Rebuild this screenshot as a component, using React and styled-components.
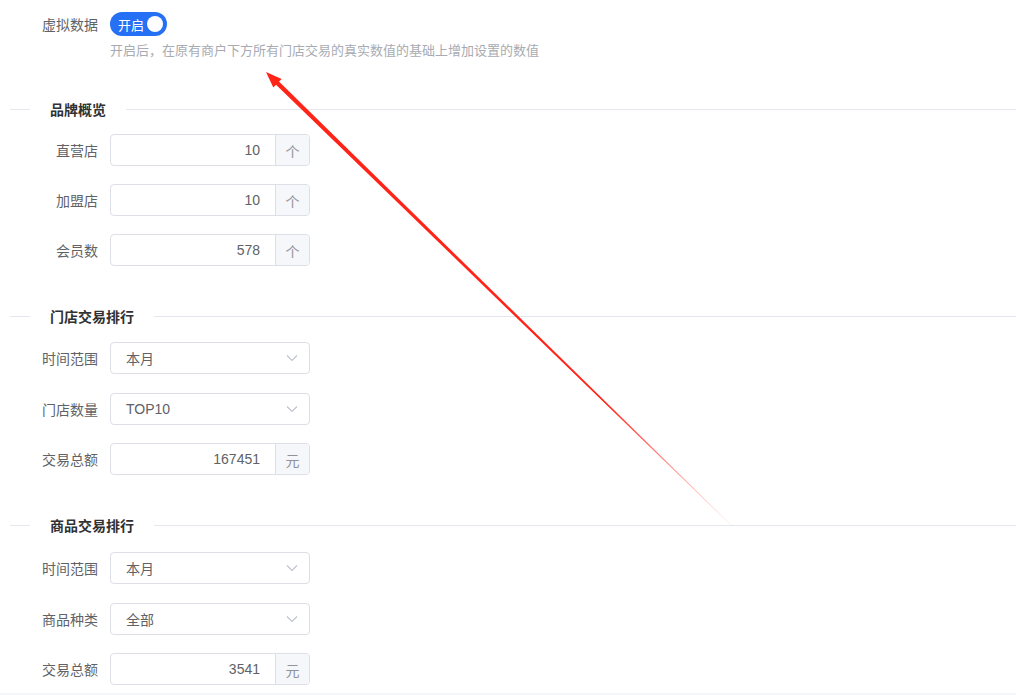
import styled, { createGlobalStyle } from 'styled-components';

const GlobalStyle = createGlobalStyle`
  html, body {
    margin: 0;
    padding: 0;
    background: #fff;
  }
  body {
    font-family: "Liberation Sans", "Noto Sans CJK SC", sans-serif;
    color: #606266;
  }
`;

const sections = [
  {
    title: '品牌概览',
    top: 38,
    offset: 15,
    gap: 18,
    rows: [
      { label: '直营店', type: 'number', value: '10', unit: '个' },
      { label: '加盟店', type: 'number', value: '10', unit: '个' },
      { label: '会员数', type: 'number', value: '578', unit: '个' }
    ]
  },
  {
    title: '门店交易排行',
    top: 40,
    offset: 16,
    gap: 18.5,
    rows: [
      { label: '时间范围', type: 'select', value: '本月' },
      { label: '门店数量', type: 'select', value: 'TOP10' },
      { label: '交易总额', type: 'number', value: '167451', unit: '元' }
    ]
  },
  {
    title: '商品交易排行',
    top: 40,
    offset: 17,
    gap: 18.5,
    rows: [
      { label: '时间范围', type: 'select', value: '本月' },
      { label: '商品种类', type: 'select', value: '全部' },
      { label: '交易总额', type: 'number', value: '3541', unit: '元' }
    ]
  }
];

const Chevron = () => (
  <svg width="12" height="8" viewBox="0 0 12 8">
    <polyline points="1,1.5 6,6.5 11,1.5" fill="none" stroke="#c0c4cc" strokeWidth="1.2" />
  </svg>
);

const Arrow = () => (
  <ArrowLayer width="1016" height="695" viewBox="0 0 1016 695">
    <defs>
      <linearGradient id="fade" gradientUnits="userSpaceOnUse" x1="266" y1="72" x2="733" y2="527">
        <stop offset="0" stopColor="#ff2418" stopOpacity="1" />
        <stop offset="0.72" stopColor="#ff2418" stopOpacity="1" />
        <stop offset="1" stopColor="#ff2418" stopOpacity="0.05" />
      </linearGradient>
    </defs>
    <polygon points="266,72 281.7,78.9 279,81.6 733.2,526.8 732.8,527.2 276,84.8 273.3,87.5" fill="url(#fade)" />
  </ArrowLayer>
);

const App = () => (
  <Page>
    <GlobalStyle />
    <SwitchRow>
      <Label>虚拟数据</Label>
      <Switch>
        <span>开启</span>
        <Knob />
      </Switch>
    </SwitchRow>
    <Hint>开启后，在原有商户下方所有门店交易的真实数值的基础上增加设置的数值</Hint>

    {sections.map((section) => (
      <Section key={section.title} $top={section.top} $gap={section.gap}>
        <Divider $space={section.offset - section.gap}>
          <span>{section.title}</span>
        </Divider>
        {section.rows.map((row, idx) => (
          <Row key={idx}>
            <Label>{row.label}</Label>
            {row.type === 'number' ? (
              <Field>
                <Value>{row.value}</Value>
                <Append>{row.unit}</Append>
              </Field>
            ) : (
              <Field>
                <SelectValue>{row.value}</SelectValue>
                <Caret>
                  <Chevron />
                </Caret>
              </Field>
            )}
          </Row>
        ))}
      </Section>
    ))}
    <Footer />
    <Arrow />
  </Page>
);

const Page = styled.div`
  position: relative;
  width: 1016px;
  height: 695px;
  overflow: hidden;
  padding-top: 12px;
  box-sizing: border-box;
  display: flex;
  flex-direction: column;
`;

const Label = styled.label`
  width: 110px;
  box-sizing: border-box;
  padding-right: 12px;
  text-align: right;
  font-size: 14px;
  color: #606266;
  flex-shrink: 0;
`;

const SwitchRow = styled.div`
  display: flex;
  align-items: center;
  height: 24px;
  flex-shrink: 0;
`;

const Switch = styled.div`
  width: 57px;
  height: 24px;
  border-radius: 12px;
  background: #2670f6;
  display: flex;
  align-items: center;
  justify-content: space-between;
  padding: 0 4px 0 8px;
  box-sizing: border-box;
  color: #fff;
  font-size: 13px;
`;

const Knob = styled.span`
  width: 16px;
  height: 16px;
  border-radius: 50%;
  background: #fff;
`;

const Hint = styled.div`
  margin: 5px 0 0 110px;
  font-size: 13px;
  line-height: 20px;
  color: #a8abb2;
  flex-shrink: 0;
`;

const Section = styled.section`
  display: flex;
  flex-direction: column;
  flex-shrink: 0;
  gap: ${(p) => p.$gap}px;
  margin-top: ${(p) => p.$top}px;
`;

const Divider = styled.div`
  display: flex;
  align-items: center;
  height: 20px;
  margin-bottom: ${(p) => p.$space}px;
  padding-left: 10px;
  font-size: 14px;
  font-weight: bold;
  color: #303133;

  &::before {
    content: '';
    width: 20px;
    border-top: 1px solid #e4e7ed;
    margin-right: 20px;
  }

  &::after {
    content: '';
    flex: 1;
    border-top: 1px solid #e4e7ed;
    margin-left: 20px;
  }
`;

const Row = styled.div`
  display: flex;
  align-items: center;
  height: 32px;
`;

const Field = styled.div`
  width: 200px;
  height: 32px;
  box-sizing: border-box;
  border: 1px solid #dcdfe6;
  border-radius: 4px;
  display: flex;
  align-items: stretch;
  overflow: hidden;
  font-size: 14px;
  color: #606266;
`;

const Value = styled.div`
  flex: 1;
  display: flex;
  align-items: center;
  justify-content: flex-end;
  padding-right: 15px;
`;

const Append = styled.div`
  width: 34px;
  border-left: 1px solid #dcdfe6;
  background: #f5f7fa;
  color: #909399;
  display: flex;
  align-items: center;
  justify-content: center;
  padding-top: 2px;
  box-sizing: border-box;
`;

const SelectValue = styled.div`
  flex: 1;
  display: flex;
  align-items: center;
  padding-left: 15px;
`;

const Caret = styled.div`
  width: 34px;
  display: flex;
  align-items: center;
  justify-content: center;
`;

const Footer = styled.div`
  margin-top: 8px;
  flex: 1;
  background: #f5f6f8;
`;

const ArrowLayer = styled.svg`
  position: absolute;
  left: 0;
  top: 0;
  pointer-events: none;
`;

export default App;
